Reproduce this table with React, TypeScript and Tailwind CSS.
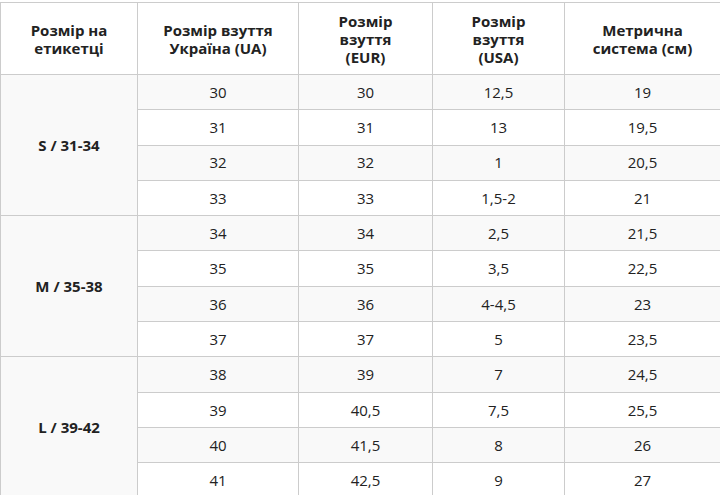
const rows: [string, string, string, string][] = [
  ["30", "30", "12,5", "19"],
  ["31", "31", "13", "19,5"],
  ["32", "32", "1", "20,5"],
  ["33", "33", "1,5-2", "21"],
  ["34", "34", "2,5", "21,5"],
  ["35", "35", "3,5", "22,5"],
  ["36", "36", "4-4,5", "23"],
  ["37", "37", "5", "23,5"],
  ["38", "39", "7", "24,5"],
  ["39", "40,5", "7,5", "25,5"],
  ["40", "41,5", "8", "26"],
  ["41", "42,5", "9", "27"],
]

const groups = ["S / 31-34", "M / 35-38", "L / 39-42"]

const cell = "border border-[#cccccc] text-center align-middle"

export default function App() {
  return (
    <div className="w-[720px] pt-[2px] bg-white text-[#222222] font-['Open_Sans',sans-serif] text-[15px]">
      <table className="w-[720px] border-collapse table-fixed">
        <colgroup>
          <col className="w-[137px]" />
          <col className="w-[161px]" />
          <col className="w-[134px]" />
          <col className="w-[132px]" />
          <col className="w-[156px]" />
        </colgroup>
        <thead>
          <tr className="h-[72px] font-bold leading-[18px]">
            <th className={`${cell} px-2`}>Розмір на<br />етикетці</th>
            <th className={`${cell} px-2`}>Розмір взуття<br />Україна (UA)</th>
            <th className={`${cell} px-2`}>Розмір<br />взуття<br />(EUR)</th>
            <th className={`${cell} px-2`}>Розмір<br />взуття<br />(USA)</th>
            <th className={`${cell} px-2`}>Метрична<br />система (см)</th>
          </tr>
        </thead>
        <tbody>
          {rows.map((r, i) => (
            <tr key={i} className={`h-[35.3px] ${i % 2 === 0 ? "bg-[#f9f9f9]" : "bg-white"}`}>
              {i % 4 === 0 && (
                <td rowSpan={4} className={`${cell} font-bold bg-[#f9f9f9]`}>
                  {groups[i / 4]}
                </td>
              )}
              {r.map((v, j) => (
                <td key={j} className={cell}>{v}</td>
              ))}
            </tr>
          ))}
        </tbody>
      </table>
    </div>
  )
}
